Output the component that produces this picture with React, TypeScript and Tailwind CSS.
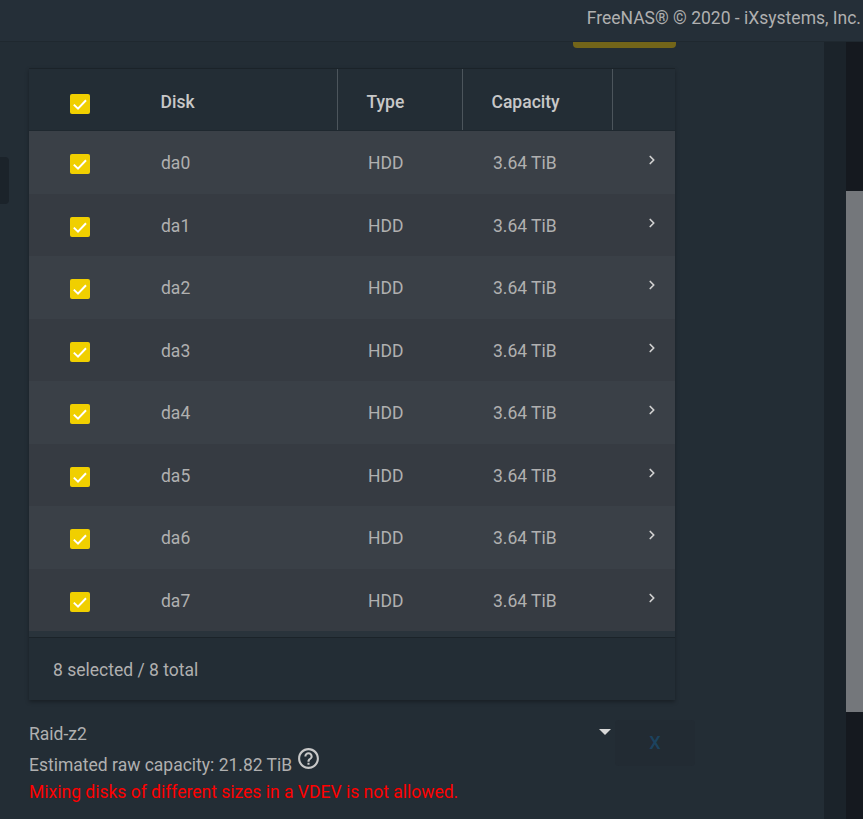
import React from 'react';
import { ChevronRight } from 'lucide-react';

const disks = ['da0', 'da1', 'da2', 'da3', 'da4', 'da5', 'da6', 'da7'];

const rowCols = 'grid grid-cols-[102px_207px_125px_150px_1fr] items-center';

function Check() {
  return (
    <span className="flex h-5 w-5 items-center justify-center rounded-[2px] bg-[#f0cf00]">
      <svg viewBox="0 0 20 20" className="h-5 w-5" fill="none">
        <path d="M3.8 10.6l4.2 4 8-8.4" stroke="#ffffff" strokeWidth="2" />
      </svg>
    </span>
  );
}

export default function App() {
  return (
    <div className="flex h-[819px] w-[863px] flex-col overflow-hidden bg-[#232d35] font-['Roboto',sans-serif] text-[17.5px] text-[#b0b0b0]">
      {/* top bar */}
      <div className="flex h-[42px] shrink-0 items-center justify-end border-b border-[#1f282f] bg-[#252f38] pr-[2px]">
        <span className="-translate-y-[2px]">FreeNAS® © 2020 - iXsystems, Inc.</span>
      </div>

      <div className="relative flex min-h-0 flex-1">
        {/* side handle */}
        <div className="absolute left-0 top-[115px] h-[47px] w-[9px] rounded-r bg-[#1b232a]" />

        <div className="min-w-0 flex-1">
          <div className="ml-[573px] h-[6px] w-[103px] rounded-b bg-[#736519]" />

          <div className="ml-[29px] mt-[20px] w-[646px] shadow-[0_2px_4px_rgba(0,0,0,0.3)]">
            {/* table head */}
            <div className={`${rowCols} h-[63px] border-y border-t-[#1b2329] border-b-[#1f282f] bg-[#232d35] font-medium text-[#c8c8c8]`}>
              <div className="flex justify-start pl-[41px] pt-[8px]">
                <Check />
              </div>
              <div className="flex h-full items-center border-r border-[#4c555c] pl-[29.5px] pt-[6px]">Disk</div>
              <div className="flex h-full items-center border-r border-[#4c555c] pl-[28.5px] pt-[6px]">Type</div>
              <div className="flex h-full items-center border-r border-[#4c555c] pl-[28.5px] pt-[6px]">Capacity</div>
              <div />
            </div>

            {/* rows */}
            {disks.map((d, i) => (
              <div
                key={d}
                className={`${rowCols} h-[62.5px] ${i % 2 === 0 ? 'bg-[#3a4047]' : 'bg-[#363b42]'}`}
              >
                <div className="flex pl-[41px] pt-[4px]">
                  <Check />
                </div>
                <div className="pl-[30px] pt-[2px]">{d}</div>
                <div className="pl-[30px] pt-[2px]">HDD</div>
                <div className="pl-[30px] pt-[2px]">3.64 TiB</div>
                <div className="pl-[32px]">
                  <ChevronRight className="h-[14px] w-[14px] -translate-y-[2px] text-[#d0d0d0]" strokeWidth={3} />
                </div>
              </div>
            ))}

            <div className="h-[6px] bg-[#29333b]" />

            {/* footer */}
            <div className="flex h-[63px] items-center border-t border-[#1b2329] bg-[#232d35] pl-[24px] pt-[2px]">
              8 selected / 8 total
            </div>
          </div>

          {/* vdev */}
          <div className="relative ml-[29px] mt-[19px] w-[666px]">
            <div className="flex h-[29px] w-[582px] items-center justify-between">
              <span className="pt-[2px]">Raid-z2</span>
              <span className="mb-[3px] h-0 w-0 border-x-[6px] border-t-[6px] border-x-transparent border-t-[#d8d8d8]" />
            </div>
            <div className="mt-[4px] flex h-[26px] items-center">
              <span>Estimated raw capacity: 21.82 TiB</span>
              <svg viewBox="0 0 24 24" className="mb-[13px] ml-[4px] h-[25px] w-[25px]" fill="#c8c8c8">
                <path d="M11 18h2v-2h-2v2zm1-16C6.48 2 2 6.48 2 12s4.480 10 10 10 10-4.480 10-10S17.520 2 12 2zm0 18c-4.410 0-8-3.590-8-8s3.590-8 8-8 8 3.590 8 8-3.590 8-8 8zm0-14c-2.210 0-4 1.790-4 4h2c0-1.100.9-2 2-2s2 .9 2 2c0 2-3 1.750-3 5h2c0-2.250 3-2.500 3-5 0-2.210-1.790-4-4-4z" />
              </svg>
            </div>
            <div className="mt-[1px] flex h-[26px] items-center text-[#ff0000]">
              Mixing disks of different sizes in a VDEV is not allowed.
            </div>
            {/* disabled remove button */}
            <div className="absolute right-0 top-[1px] flex h-[46px] w-[80px] items-center justify-center rounded bg-[#222b33] text-lg font-medium text-[#1c435f]">
              X
            </div>
          </div>
        </div>

        {/* gutter and scrollbar */}
        <div className="w-[22px] shrink-0 bg-[#1b232a]" />
        <div className="w-[17px] shrink-0 bg-[#15191f] pt-[149px]">
          <div className="h-[521px] bg-[#74777b]" />
        </div>
      </div>
    </div>
  );
}
